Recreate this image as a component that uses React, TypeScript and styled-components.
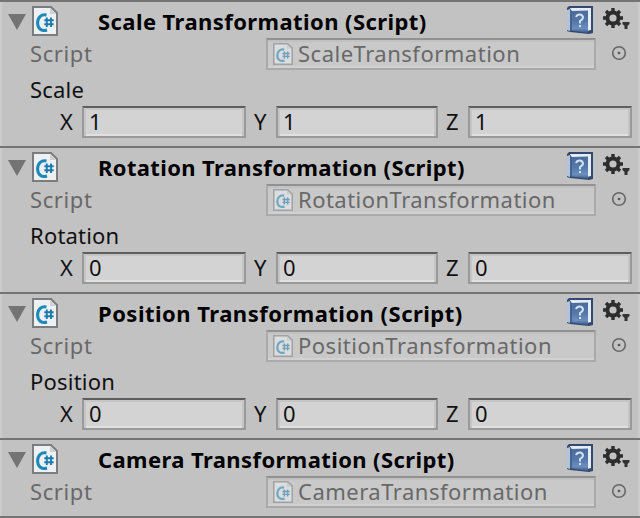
import React from "react";
import styled, { createGlobalStyle } from "styled-components";

const GlobalStyle = createGlobalStyle`
  *, *::before, *::after { box-sizing: border-box; }
  body { margin: 0; background: #c2c2c2; }
`;

const Inspector = styled.main`
  width: 640px;
  height: 518px;
  overflow: hidden;
  background: #c2c2c2;
  font-family: "Noto Sans", "Open Sans", sans-serif;
  font-size: 22px;
  line-height: 30px;
  color: #111;
  white-space: nowrap;
`;

const Component = styled.section<{ $short?: boolean }>`
  height: ${(p) => (p.$short ? 80 : 146)}px;
  border-top: 2px solid #747474;
  ${(p) => p.$short && "border-bottom: 2px solid #747474;"}
  box-shadow: inset 2px 0 #cbcbcb, inset -2px 0 #cbcbcb;
`;

const Header = styled.header`
  display: flex;
  height: 36px;
  padding: 4px 8px 0;
`;

const Foldout = styled.svg`
  width: 18px;
  height: 16px;
  margin: 8px 6px 0 0;
`;

const ScriptIcon = styled.svg<{ $small?: boolean }>`
  flex: none;
  width: ${(p) => (p.$small ? 20 : 26)}px;
  height: ${(p) => (p.$small ? 22 : 30)}px;
  opacity: ${(p) => (p.$small ? 0.5 : 1)};
`;

const Title = styled.h2<{ $spacing: number }>`
  flex: 1;
  margin: 0 0 0 40px;
  font-size: 22px;
  font-weight: 700;
  line-height: 30px;
  letter-spacing: ${(p) => p.$spacing}px;
  color: #000;
`;

const HelpIcon = styled.svg`
  width: 28px;
  height: 30px;
  margin-right: 9px;
`;

const GearIcon = styled.svg`
  width: 27px;
  height: 26px;
  margin-right: 2px;
`;

const ScriptRow = styled.div`
  display: flex;
  height: 32px;
  padding: 0 10px 0 30px;
  color: #686868;
`;

const ScriptLabel = styled.span`
  width: 236px;
  letter-spacing: 0.6px;
`;

const ObjectField = styled.div`
  display: flex;
  align-items: center;
  width: 330px;
  height: 32px;
  padding-left: 5px;
  border: 2px solid #aaa;
  border-top-color: #919191;
  background: #c9c9c9;
  box-shadow: inset 0 2px #c1c1c1, inset 0 -2px #d1d1d1;
`;

const ObjectName = styled.span<{ $spacing: number }>`
  margin: -3px 0 0 5px;
  letter-spacing: ${(p) => p.$spacing}px;
`;

const Picker = styled.svg`
  width: 16px;
  height: 16px;
  margin: 7px 0 0 15px;
`;

const PropertyLabel = styled.div`
  height: 36px;
  padding: 4px 0 0 30px;
  letter-spacing: 0.2px;
`;

const VectorRow = styled.div`
  display: grid;
  grid-template-columns: 22px 164px 8px 22px 162px 8px 22px 164px;
  padding-left: 60px;
`;

const AxisLabel = styled.label`
  line-height: 31px;
`;

const NumberBox = styled.div`
  height: 32px;
  padding-left: 5px;
  border: 2px solid #999;
  border-top-color: #5e5e5e;
  background: #d3d3d3;
  box-shadow: inset 0 2px #c5c5c5, inset 2px 0 #c5c5c5, inset -2px 0 #c5c5c5, inset 0 -2px #e1e1e1;
  line-height: 27px;
`;

const Gap = styled.span``;

function CSharpIcon({ small }: { small?: boolean }) {
  return (
    <ScriptIcon $small={small} viewBox="0 0 26 30" preserveAspectRatio="none">
      <path d="M1 1H19L25 7V29H1Z" fill="#edf1f4" stroke="#7a7c7e" strokeWidth="2" />
      <path d="M18 2V8H24Z" fill="#cdd1d3" />
      <path d="M14.5 9C9 8 5.6 11.5 5.6 17c0 5.6 4 8.6 9.4 7" fill="none" stroke="#1c88ba" strokeWidth="3" />
      <path d="M14.8 11.5V21M19 11.5V21M12.3 14.3H21.7M12.3 18.3H21.7" fill="none" stroke="#1c7bac" strokeWidth="1.9" />
    </ScriptIcon>
  );
}

function BookIcon() {
  return (
    <HelpIcon viewBox="0 0 28 30">
      <defs>
        <linearGradient id="cover" x1="0" y1="0" x2="0" y2="1">
          <stop offset="0" stopColor="#4a6b9b" />
          <stop offset="0.5" stopColor="#5579aa" />
          <stop offset="0.8" stopColor="#6b8fbd" />
          <stop offset="1" stopColor="#3a5486" />
        </linearGradient>
      </defs>
      <path d="M1 2L3 0H27V27L23 28L4 26L1 25Z" fill="#33496f" />
      <path d="M4 2H25V24L21 25V5H5Z" fill="#e6ecf3" />
      <path d="M1 4L4 3V25L1 24Z" fill="#b4c3d8" />
      <path d="M4 3L6 5V25L4 24Z" fill="#46648f" />
      <path d="M6 5L22 4.5V27L6 24.5Z" fill="url(#cover)" />
      <path d="M10 11q1-2.5 3.7-2.5t3.3 2.8q0 2-3 3.7v2.5" fill="none" stroke="#d5e2f0" strokeWidth="2" />
      <path d="M13 19h2v2h-2z" fill="#d5e2f0" />
    </HelpIcon>
  );
}

function SettingsIcon() {
  return (
    <GearIcon viewBox="0 0 27 26">
      <g transform="translate(10 12)" fill="none" stroke="#2d2d2d">
        <circle r="5.6" strokeWidth="4" />
        <path d="M0-6V-10M0 6V10M-6 0H-10M6 0H10M-4.5-4.5L-7-7M4.5-4.5L7-7M-4.5 4.5L-7 7M4.5 4.5L7 7" strokeWidth="3.4" />
      </g>
      <path d="M19.5 16h7v2l-2 2v3h-3v-3l-2-2z" fill="#333" />
    </GearIcon>
  );
}

interface Item {
  name: string;
  value?: string;
  titleSpacing: number;
  nameSpacing: number;
}

const items: Item[] = [
  { name: "Scale", value: "1", titleSpacing: 0.42, nameSpacing: 0.5 },
  { name: "Rotation", value: "0", titleSpacing: 0.36, nameSpacing: 0.47 },
  { name: "Position", value: "0", titleSpacing: 0.48, nameSpacing: 0.5 },
  { name: "Camera", titleSpacing: 0.4, nameSpacing: 0.5 },
];

function Transformation({ name, value, titleSpacing, nameSpacing }: Item) {
  return (
    <Component $short={value === undefined}>
      <Header>
        <Foldout viewBox="0 0 18 16"><path d="M0 0H18L9 16Z" fill="#747474" /></Foldout>
        <CSharpIcon />
        <Title $spacing={titleSpacing}>{name} Transformation (Script)</Title>
        <BookIcon />
        <SettingsIcon />
      </Header>
      <ScriptRow>
        <ScriptLabel>Script</ScriptLabel>
        <ObjectField>
          <CSharpIcon small />
          <ObjectName $spacing={nameSpacing}>{name}Transformation</ObjectName>
        </ObjectField>
        <Picker viewBox="0 0 16 16">
          <circle cx="8" cy="8" r="6.3" fill="none" stroke="#666" strokeWidth="1.6" />
          <circle cx="8" cy="8" r="1.3" fill="#555" />
        </Picker>
      </ScriptRow>
      {value !== undefined && (
        <>
          <PropertyLabel>{name}</PropertyLabel>
          <VectorRow>
            <AxisLabel>X</AxisLabel><NumberBox>{value}</NumberBox><Gap />
            <AxisLabel>Y</AxisLabel><NumberBox>{value}</NumberBox><Gap />
            <AxisLabel>Z</AxisLabel><NumberBox>{value}</NumberBox>
          </VectorRow>
        </>
      )}
    </Component>
  );
}

export default function App() {
  return (
    <>
      <GlobalStyle />
      <Inspector>
        {items.map((item) => <Transformation key={item.name} {...item} />)}
      </Inspector>
    </>
  );
}
